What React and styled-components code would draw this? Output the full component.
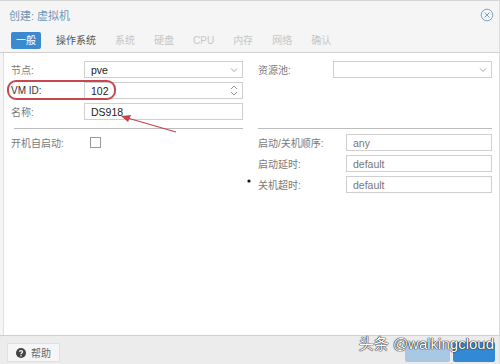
import React from 'react';
import styled, { createGlobalStyle } from 'styled-components';

const GlobalStyle = createGlobalStyle`
    html, body {
        margin: 0;
        padding: 0;
        background: #ffffff;
    }
    body {
        font-family: "Liberation Sans", "Noto Sans CJK SC", sans-serif;
        font-size: 10px;
        color: #666;
    }
`

const Window = styled.div`
    width: 500px;
    height: 364px;
    display: flex;
    flex-direction: column;
    background: #f5f5f5;
    border-top: 1px solid #d6d6d6;
    border-right: 1px solid #dcdcdc;
    box-sizing: border-box;
    position: relative;
    overflow: hidden;
`

const TitleBar = styled.div`
    height: 27px;
    display: flex;
    align-items: center;
    justify-content: space-between;
    padding: 0 5px 0 9px;
`

const Title = styled.div`
    color: #6c97b8;
    font-size: 11px;
`

const TabBar = styled.div`
    display: flex;
    align-items: center;
    height: 24px;
    padding: 0 0 0 11px;
    border-bottom: 1px solid #cfcfcf;
`

const Tab = styled.div`
    height: 17px;
    line-height: 17px;
    padding: 0 ${p => (p.active ? '5px' : '0')};
    margin-right: ${p => (p.active ? '15px' : '19px')};
    font-size: 10px;
    border-radius: 2px;
    background: ${p => (p.active ? '#3b8ad0' : 'transparent')};
    color: ${p => (p.active ? '#fff' : p.enabled ? '#555' : '#c6c6c6')};
`

const Body = styled.div`
    flex: 1;
    background: #fff;
    margin-left: 3px;
    border-left: 1px solid #e0e0e0;
    padding: 8px 7px 0 7px;
    position: relative;
`

const Columns = styled.div`
    display: grid;
    grid-template-columns: 232px 1fr;
    column-gap: 15px;
`

const Column = styled.div`
    display: flex;
    flex-direction: column;
    gap: ${p => p.gap || 4}px;
`

const Row = styled.div`
    display: flex;
    align-items: center;
    height: 17px;
`

const Label = styled.div`
    width: ${p => p.w || 73}px;
    color: ${p => (p.dark ? '#333' : '#7a7a7a')};
    font-size: 10px;
    flex-shrink: 0;
`

const Field = styled.div`
    flex: 1;
    height: 17px;
    border: 1px solid #cfcfcf;
    box-sizing: border-box;
    display: flex;
    align-items: center;
    justify-content: space-between;
    padding: 0 4px 0 6px;
    font-size: 10.5px;
    color: ${p => (p.muted ? '#777' : '#222')};
`

const Divider = styled.div`
    height: 1px;
    background: #bdbdbd;
    margin: 8px 0 5px ${p => (p.inset ? 3 : 0)}px;
`

const Checkbox = styled.div`
    width: 9px;
    height: 9px;
    border: 1px solid #999;
    margin-left: 6px;
`

const Highlight = styled.div`
    position: absolute;
    left: 3px;
    top: 27px;
    width: 109px;
    height: 20px;
    border: 2px solid #c9464e;
    border-radius: 9px;
    box-sizing: border-box;
`

const Overlay = styled.svg`
    position: absolute;
    left: 0;
    top: 0;
    pointer-events: none;
`

const Footer = styled.div`
    height: 26px;
    border-top: 1px solid #d0d0d0;
    display: flex;
    align-items: flex-end;
    justify-content: space-between;
    padding: 0 4px 2px 7px;
    background: #ececec;
`

const HelpButton = styled.div`
    width: 53px;
    height: 19px;
    background: #f6f6f6;
    border: 1px solid #e0e0e0;
    box-sizing: border-box;
    display: flex;
    align-items: center;
    justify-content: center;
    gap: 5px;
    color: #666;
    font-size: 10px;
`

const RightGroup = styled.div`
    display: flex;
    align-items: center;
    gap: 3px;
    position: relative;
`

const ActionButton = styled.div`
    width: ${p => p.w}px;
    height: 20px;
    border-radius: 2px;
    background: ${p => (p.primary ? '#3389d4' : '#a9c8e6')};
`

const Watermark = styled.div`
    position: absolute;
    right: 1px;
    top: -10px;
    font-size: 15px;
    color: #fff;
    white-space: nowrap;
    text-shadow: 0 0 1px #222, 0 0 1px #222, 0 0 1px #222;
    font-family: "Liberation Sans", "Noto Sans CJK SC", sans-serif;
`

const Chevron = () => (
    <svg width="8" height="6" viewBox="0 0 8 6">
        <path d="M1 1.5 L4 4.5 L7 1.5" fill="none" stroke="#999" strokeWidth="0.9" />
    </svg>
)

const Spinner = () => (
    <svg width="8" height="13" viewBox="0 0 8 13">
        <path d="M1 5 L4 2 L7 5" fill="none" stroke="#888" strokeWidth="0.9" />
        <path d="M1 8 L4 11 L7 8" fill="none" stroke="#888" strokeWidth="0.9" />
    </svg>
)

const tabs = [
    { name: '一般', active: true },
    { name: '操作系统', enabled: true },
    { name: '系统' },
    { name: '硬盘' },
    { name: 'CPU' },
    { name: '内存' },
    { name: '网络' },
    { name: '确认' },
]

export default function App() {
    return (
        <Window>
            <GlobalStyle />
            <TitleBar>
                <Title>创建: 虚拟机</Title>
                <svg width="14" height="14" viewBox="0 0 14 14">
                    <circle cx="7" cy="7" r="5.8" fill="none" stroke="#7fa3c4" strokeWidth="1" />
                    <path d="M4.6 4.6 L9.4 9.4 M9.4 4.6 L4.6 9.4" stroke="#7fa3c4" strokeWidth="1" />
                </svg>
            </TitleBar>
            <TabBar>
                {tabs.map(t => (
                    <Tab key={t.name} active={t.active} enabled={t.enabled}>{t.name}</Tab>
                ))}
            </TabBar>
            <Body>
                <Columns>
                    <Column gap={4}>
                        <Row>
                            <Label>节点:</Label>
                            <Field>pve<Chevron /></Field>
                        </Row>
                        <Row>
                            <Label dark>VM ID:</Label>
                            <Field>102<Spinner /></Field>
                        </Row>
                        <Row>
                            <Label>名称:</Label>
                            <Field>DS918</Field>
                        </Row>
                    </Column>
                    <Column gap={4}>
                        <Row>
                            <Label w={75}>资源池:</Label>
                            <Field><span /><Chevron /></Field>
                        </Row>
                    </Column>
                </Columns>
                <Columns>
                    <Divider inset />
                    <Divider />
                </Columns>
                <Columns>
                    <Column>
                        <Row>
                            <Label>开机自启动:</Label>
                            <Checkbox />
                        </Row>
                    </Column>
                    <Column gap={4}>
                        <Row>
                            <Label w={88}>启动/关机顺序:</Label>
                            <Field muted>any</Field>
                        </Row>
                        <Row>
                            <Label w={88}>启动延时:</Label>
                            <Field muted>default</Field>
                        </Row>
                        <Row>
                            <Label w={88}>关机超时:</Label>
                            <Field muted>default</Field>
                        </Row>
                    </Column>
                </Columns>
                <Highlight />
            </Body>
            <Overlay width="500" height="364" viewBox="0 0 500 364">
                <path d="M176 131 L124 116" stroke="#c8434b" strokeWidth="1.3" />
                <path d="M121 115 L131 114 L128 121 Z" fill="#c8434b" />
                <circle cx="249" cy="180" r="1.6" fill="#111" />
            </Overlay>
            <Footer>
                <HelpButton>
                    <svg width="10" height="10" viewBox="0 0 10 10">
                        <circle cx="5" cy="5" r="5" fill="#444" />
                        <path d="M3.4 3.8 C3.4 2.2 6.6 2.2 6.6 3.8 C6.6 5 5 5 5 6.2" fill="none" stroke="#fff" strokeWidth="1.2" />
                        <circle cx="5" cy="7.8" r="0.7" fill="#fff" />
                    </svg>
                    帮助
                </HelpButton>
                <RightGroup>
                    <ActionButton w={45} />
                    <ActionButton w={42} primary />
                    <Watermark>头条 @walkingcloud</Watermark>
                </RightGroup>
            </Footer>
        </Window>
    )
}
